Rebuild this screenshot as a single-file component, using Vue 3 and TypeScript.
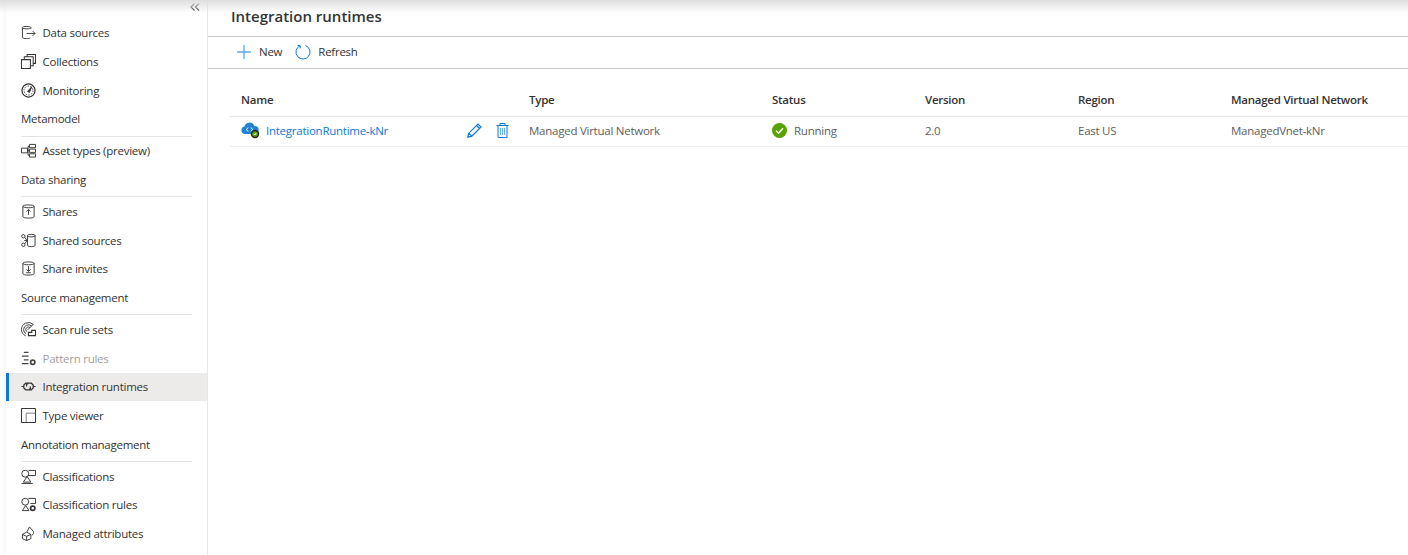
<script setup lang="ts">
type NavRow = { kind: 'item' | 'heading'; label: string; icon?: string; disabled?: boolean; active?: boolean }

const navRows: NavRow[] = [
  { kind: 'item', label: 'Data sources', icon: 'datasource' },
  { kind: 'item', label: 'Collections', icon: 'collections' },
  { kind: 'item', label: 'Monitoring', icon: 'monitoring' },
  { kind: 'heading', label: 'Metamodel' },
  { kind: 'item', label: 'Asset types (preview)', icon: 'assets' },
  { kind: 'heading', label: 'Data sharing' },
  { kind: 'item', label: 'Shares', icon: 'shares' },
  { kind: 'item', label: 'Shared sources', icon: 'sharedsources' },
  { kind: 'item', label: 'Share invites', icon: 'invites' },
  { kind: 'heading', label: 'Source management' },
  { kind: 'item', label: 'Scan rule sets', icon: 'scan' },
  { kind: 'item', label: 'Pattern rules', icon: 'pattern', disabled: true },
  { kind: 'item', label: 'Integration runtimes', icon: 'runtime', active: true },
  { kind: 'item', label: 'Type viewer', icon: 'viewer' },
  { kind: 'heading', label: 'Annotation management' },
  { kind: 'item', label: 'Classifications', icon: 'classify' },
  { kind: 'item', label: 'Classification rules', icon: 'classrules' },
  { kind: 'item', label: 'Managed attributes', icon: 'attributes' },
]

const columns = ['Name', 'Type', 'Status', 'Version', 'Region', 'Managed Virtual Network']
</script>

<template>
  <div class="page">
    <div class="top-shade"></div>
    <aside class="sidebar">
      <div class="collapse">
        <svg width="10" height="8" viewBox="0 0 10 8" fill="none" stroke="#333" stroke-width="1.100">
          <path d="M4.500 .5 1 4l3.500 3.500M9 .5 5.500 4 9 7.500" />
        </svg>
      </div>
      <nav>
        <template v-for="row in navRows" :key="row.label">
          <div v-if="row.kind === 'heading'" class="heading">{{ row.label }}</div>
          <div v-else class="item" :class="{ disabled: row.disabled, active: row.active }">
            <svg class="nav-icon" viewBox="0 0 16 16" fill="none" stroke="currentColor" stroke-width="1">
              <template v-if="row.icon === 'datasource'">
                <path d="M10.500 4V2.800c0-.9-2-1.300-4.500-1.300s-4.500 .4-4.500 1.300v10.400c0 .9 2 1.300 4.500 1.300 1.600 0 3.200-.2 3.900-.7M1.500 2.800c0 .9 2 1.300 4.500 1.300s4.500-.4 4.500-1.300M6 9h9M12.500 6.500 15 9l-2.500 2.500" />
              </template>
              <template v-else-if="row.icon === 'collections'">
                <path d="M.5 6h9.500v9.500H.5zM3.500 6V3h9.500v9.500h-3M6.500 3V.5h9v9.500H13" stroke-width="1.100" />
              </template>
              <template v-else-if="row.icon === 'monitoring'">
                <circle cx="8" cy="8" r="7" stroke-width="1.300" />
                <circle cx="8" cy="8" r="4.800" stroke-dasharray="1.500 1.500" />
                <path d="M7 9 11.500 4 9 10z" fill="currentColor" />
              </template>
              <template v-else-if="row.icon === 'assets'">
                <path d="M.5 5.500h6.500v5H.5zM9 1.500h6.500v3.500H9zM9 6.500h6.500V10H9zM9 11.500h6.500V15H9zM7 8h2M7.500 3.500V13H9M7.500 3.500H9" />
              </template>
              <template v-else-if="row.icon === 'shares'">
                <path d="M2 2.500c0-1 2.700-1.500 6-1.500s6 .5 6 1.500v11c0 1-2.700 1.500-6 1.500s-6-.5-6-1.500zM2 2.500C2 3.500 4.700 4 8 4s6-.5 6-1.500M8 11.500V6M5.800 8 8 5.800 10.200 8" />
              </template>
              <template v-else-if="row.icon === 'sharedsources'">
                <circle cx="2.500" cy="3.500" r="1.800" />
                <circle cx="2.500" cy="12.500" r="1.800" />
                <path d="M4 4.500 6.500 8 4 11.500M7 8H3.500M7 2.800c0-1 1.700-1.300 4-1.300s4 .3 4 1.300v10.400c0 1-1.700 1.300-4 1.300s-4-.3-4-1.300zM7 2.800c0 1 1.700 1.300 4 1.300s4-.3 4-1.300" />
              </template>
              <template v-else-if="row.icon === 'invites'">
                <path d="M2 2.500c0-1 2.700-1.500 6-1.500s6 .5 6 1.500v11c0 1-2.700 1.500-6 1.500s-6-.5-6-1.500zM2 2.500C2 3.500 4.700 4 8 4s6-.5 6-1.500M8 5.500V11M5.800 9 8 11.200 10.200 9M5.500 12.500h5" />
              </template>
              <template v-else-if="row.icon === 'scan'">
                <path d="M13 2.500A7.500 7.500 0 0 0 .5 8c0 3 1.500 5.300 4.500 6.800M11.300 4.200A5.200 5.200 0 0 0 2.800 8c0 2 1 3.500 2.700 4.500M9.500 5.800A3 3 0 0 0 5 8c0 1 .5 1.800 1.500 2.300M7 8.500 13.500 2" />
                <path d="M8 11h3.500V9H15.500v5.500H8z" stroke-width="1.300" />
              </template>
              <template v-else-if="row.icon === 'pattern'">
                <path d="M3 1.500h5M1 5.500h7M3 9.500h5M1 13.500h7" stroke-width="1.200" />
                <circle cx="12.500" cy="12" r="2.300" stroke-width="1.800" />
              </template>
              <template v-else-if="row.icon === 'runtime'">
                <path d="M.5 8h2.500M13 8h2.500M8 4.500H5L3 6.500v3L5 11.500h3.500L10 10V8M8 11.500h3l2-2v-3l-2-2H7.500L6 6v2" stroke-width="1.300" />
              </template>
              <template v-else-if="row.icon === 'viewer'">
                <path d="M.5 .5h15v15H.5z" stroke="#222" />
                <path d="M5.500 15V5.500H15" stroke="#777" />
              </template>
              <template v-else-if="row.icon === 'classify'">
                <circle cx="4.500" cy="5" r="3.700" />
                <path d="M8 1.500h7.500V7H7.500M6.500 8l-4 6h8zM.5 15.500h12" />
              </template>
              <template v-else-if="row.icon === 'classrules'">
                <circle cx="4.500" cy="5" r="3.700" />
                <path d="M8 1.500h7.500V7H10M5 9l-3.500 5.500h7z" />
                <circle cx="12.500" cy="12" r="2.300" stroke-width="1.800" />
              </template>
              <template v-else>
                <path d="m1.500 9 4.500-2.500L10.500 9v4.500L6 15.500l-4.500-2zM1.500 9 6 11l4.500-2M6 11v4.500M6.500 6l2.500-5 4 4.500c.8 1.500.3 3.500-1.500 4.500" />
              </template>
            </svg>
            <span>{{ row.label }}</span>
          </div>
        </template>
      </nav>
    </aside>

    <main class="content">
      <h1 class="title">Integration runtimes</h1>
      <div class="toolbar">
        <button class="tool tool-new" type="button">
          <svg width="14" height="14" viewBox="0 0 14 14" stroke="#5ba9e6" stroke-width="1.300" fill="none">
            <path d="M7 0v14M0 7h14" />
          </svg>
          New
        </button>
        <button class="tool" type="button">
          <svg width="16" height="16" viewBox="0 0 16 16" stroke="#0f78d4" stroke-width="1" fill="none">
            <path d="M10.500 1.500a7 7 0 1 1-5.500.2M2.500 1.500 5.300 1.700 5 4.500" />
          </svg>
          Refresh
        </button>
      </div>

      <div class="table">
        <div class="tr th">
          <div v-for="col in columns" :key="col">{{ col }}</div>
        </div>
        <div class="tr td">
          <div class="name-cell">
            <svg class="cloud" width="19" height="18" viewBox="0 0 19 18">
              <path d="M4 13a3.800 3.800 0 0 1-.6-7.500A5.200 5.200 0 0 1 13.300 5a4 4 0 0 1 .7 8z" fill="#2283d6" />
              <path d="M7 6.500 5.500 8.500 7 10.500M10 6.500l1.500 2L10 10.500" stroke="#fff" fill="none" />
              <circle cx="14" cy="13" r="4.200" fill="#222" />
              <circle cx="14" cy="13" r="2.800" fill="#57a300" />
              <path d="M12.700 13l1 1 1.700-2" stroke="#fff" fill="none" />
            </svg>
            <a class="link">IntegrationRuntime-kNr</a>
            <span class="row-actions">
              <svg width="15" height="15" viewBox="0 0 15 15" fill="none" stroke="#0f78d4" stroke-width="1.200">
                <path d="M.8 14.200l1-4L11 1l3 3-9.200 9.200zM9.500 2.500l3 3M1.800 10.200l3 3" />
              </svg>
              <svg width="13" height="15" viewBox="0 0 13 15" fill="none" stroke="#0f78d4">
                <path d="M.5 2.500h12M4 2.500V.5h5v2M2 2.500v12h9v-12" />
                <path d="M4.500 5v7M6.500 5v7M8.500 5v7" stroke="#6aaee8" />
              </svg>
            </span>
          </div>
          <div>Managed Virtual Network</div>
          <div class="status">
            <svg width="15" height="15" viewBox="0 0 15 15">
              <circle cx="7.500" cy="7.500" r="7.500" fill="#57a300" />
              <path d="M4 7.800 6.500 10.200 11 5.300" stroke="#fff" stroke-width="1.500" fill="none" />
            </svg>
            Running
          </div>
          <div>2.0</div>
          <div>East US</div>
          <div>ManagedVnet-kNr</div>
        </div>
      </div>
    </main>
  </div>
</template>

<style scoped>
.page {
  position: relative;
  display: flex;
  height: 555px;
  overflow: hidden;
  font-family: "Open Sans", "Noto Sans", sans-serif;
  font-size: 11.5px;
  letter-spacing: -0.25px;
  color: #333;
  background: #fff;
}

.top-shade {
  position: absolute;
  top: 0;
  left: 0;
  right: 0;
  height: 13px;
  background: linear-gradient(#dedede, rgba(255, 255, 255, 0));
  pointer-events: none;
}

.sidebar {
  width: 201px;
  margin-left: 6px;
  flex-shrink: 0;
  border-right: 1px solid #e6e6e6;
  box-shadow: -2px 0 4px rgba(0, 0, 0, 0.04);
}

.collapse {
  display: flex;
  justify-content: flex-end;
  height: 18.6px;
  padding: 3px 7px 0 0;
  box-sizing: border-box;
}

.item {
  display: flex;
  align-items: center;
  gap: 6.500px;
  height: 28.8px;
  padding-left: 15px;
  box-sizing: border-box;
}

.item.active {
  background: #edebe9;
  border-left: 3px solid #0f78d4;
  padding-left: 12px;
}

.item.disabled {
  color: #a0a0a0;
}

.item.disabled .nav-icon {
  color: #444;
}

.nav-icon {
  width: 15px;
  height: 15px;
  flex-shrink: 0;
  color: #333;
}

.heading {
  margin: 0 15px;
  height: 31.6px;
  padding-top: 6.500px;
  box-sizing: border-box;
  border-bottom: 1px solid #e3e3e3;
  color: #333;
  font-weight: 500;
}

.content {
  flex: 1;
  min-width: 0;
}

.title {
  margin: 0;
  height: 36px;
  padding: 6px 0 0 23px;
  box-sizing: border-box;
  font-size: 15px;
  font-weight: 600;
  letter-spacing: 0;
  color: #333;
}

.toolbar {
  display: flex;
  align-items: center;
  gap: 13px;
  height: 33px;
  padding: 0 0 2px 29px;
  box-sizing: border-box;
  border-top: 1px solid #c8c8c8;
  border-bottom: 1px solid #c8c8c8;
}

.tool {
  display: flex;
  align-items: center;
  gap: 7px;
  padding: 0;
  border: 0;
  background: none;
  color: #333;
  font: inherit;
  letter-spacing: inherit;
}

.tool-new {
  gap: 8px;
}

.table {
  margin: 22px 0 0 22px;
}

.tr {
  display: grid;
  grid-template-columns: 288px 243px 153px 153px 153px 1fr;
  align-items: center;
  padding-left: 11px;
}

.th {
  height: 17px;
  padding-bottom: 8px;
  font-weight: 600;
  border-bottom: 1px solid #e6e6e6;
}

.td {
  height: 30px;
  padding-bottom: 2.500px;
  box-sizing: border-box;
  border-bottom: 1px solid #eee;
  color: #605e5c;
}

.name-cell {
  display: flex;
  align-items: center;
  gap: 6px;
}

.link {
  color: #0f78d4;
}

.row-actions {
  display: flex;
  align-items: center;
  gap: 14px;
  margin-left: auto;
  margin-right: 20px;
}

.status {
  display: flex;
  align-items: center;
  gap: 7px;
}
</style>
